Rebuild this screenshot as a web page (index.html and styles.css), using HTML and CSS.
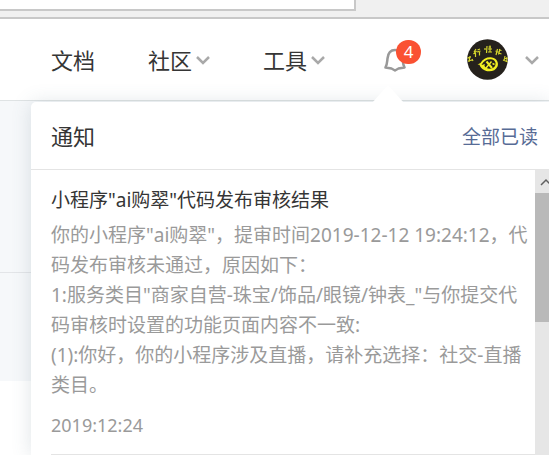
FILE: index.html
```html
<!DOCTYPE html>
<html lang="zh-CN">
<head>
<meta charset="utf-8">
<title>通知</title>
<link rel="stylesheet" href="styles.css">
</head>
<body>
<div class="browser-bar"><div class="browser-tab"></div></div>
<header class="header">
  <nav class="nav">
    <a class="nav-link" href="#">文档</a>
    <a class="nav-link" href="#">社区<svg class="chevron" viewBox="0 0 14 10"><path d="M1 2l6 6L13 2"/></svg></a>
    <a class="nav-link" href="#">工具<svg class="chevron" viewBox="0 0 14 10"><path d="M1 2l6 6L13 2"/></svg></a>
  </nav>
  <button class="bell" type="button" aria-label="通知">
    <svg class="bell-icon" viewBox="0 0 22 26"><path d="M1.500 20.500C3 18 3 16 3.500 11.500C4 6.500 6.500 3 11 3S18 6.500 18.500 11.500C19 16 19 18 20.500 20.500L14.500 21.500L11 23.500L7.500 21.500Z"/></svg>
    <span class="badge">4</span>
  </button>
  <button class="account" type="button" aria-label="账号">
    <svg class="avatar" viewBox="0 0 41 41">
      <defs><clipPath id="disc"><circle cx="20.500" cy="20.500" r="20.300"/></clipPath></defs>
      <circle cx="20.500" cy="20.500" r="20.300" fill="#25211c"/>
      <g clip-path="url(#disc)" fill="none" stroke="#d6d62c" stroke-width="1.200">
        <path d="M0 19l4-1M1 22l4-1M3 17l-1 6M5 20l1 2"/>
        <path d="M9 10l-2 3M9.500 12l-3 3M8.500 14v4M10.500 11l2.500-1M10 13l3.500-1M12.500 13v3.500"/>
        <path d="M20 7l-.500 7M18 9v2M21.500 8h2.500M21 10h4M23 6.500v6M21 13h4"/>
        <path d="M30.500 10l-1.500 6M28.500 12l3 1M32 10.500l2.500 1M33 10l-1.500 5.500M31.500 14l3 1"/>
        <path d="M37 19l4 1M38 17l-1 5M36 21l5 2M40 18l-1 5"/>
        <path fill="#f2ef22" stroke="none" d="M10.500 25.500L13.500 24C16 19.500 21 17.500 25 18.500C30 19.500 32 24 30.500 27.500C28.500 32 23 33.500 18 31.500C14.500 30 13 27.500 12.500 25.800Z"/>
        <path fill="#25211c" stroke="none" d="M14.500 26C16.500 22 20 20 24 20.300C28 20.700 29.500 24 28 27C26 30 22 30.500 19 28.500C17.500 27.500 17 26.500 18 25Z"/>
        <path stroke="#f2ef22" stroke-width="2" d="M19.500 22.500l5.500 6.500"/>
        <path stroke="#f2ef22" stroke-width="1.400" d="M24.500 22.500l-5.500 6.500M25.500 24.500l2 1"/>
      </g>
    </svg>
    <svg class="chevron" viewBox="0 0 14 10"><path d="M1 2l6 6L13 2"/></svg>
  </button>
</header>
<main class="page">
  <div class="backdrop"></div>
  <section class="panel">
    <div class="panel-head">
      <h1 class="panel-title">通知</h1>
      <a class="read-all" href="#">全部已读</a>
    </div>
    <div class="panel-body">
      <article class="notice">
        <h2 class="notice-title">小程序"ai购翠"代码发布审核结果</h2>
        <p class="notice-text">你的小程序"ai购翠"，提审时间2019-12-12 19:24:12，代<br>码发布审核未通过，原因如下：<br>1:服务类目"商家自营-珠宝/饰品/眼镜/钟表_"与你提交代<br>码审核时设置的功能页面内容不一致:<br>(1):你好，你的小程序涉及直播，请补充选择：社交-直播<br>类目。</p>
        <time class="notice-date">2019:12:24</time>
      </article>
      <div class="scrollbar" aria-hidden="true">
        <div class="scroll-up"><svg class="scroll-arrow" viewBox="0 0 12 8"><path d="M1 7l5-5 5 5"/></svg></div>
        <div class="scroll-thumb"></div>
      </div>
    </div>
  </section>
</main>
</body>
</html>
```
FILE: styles.css
```css
* { box-sizing: border-box; }
body {
  margin: 0;
  min-height: 100vh;
  display: flex;
  flex-direction: column;
  overflow: hidden;
  background: #fff;
  color: #353535;
  font-family: "Noto Sans", "Noto Sans CJK SC", sans-serif;
}
a { text-decoration: none; color: inherit; }
button { border: 0; padding: 0; background: none; font: inherit; }
svg { display: block; flex: none; }

.browser-bar {
  height: 19px;
  background: #f0f0f0;
  border-bottom: 2px solid #c8c8c8;
}
.browser-tab {
  width: 65%;
  height: 11px;
  margin-left: -1px;
  background: #fff;
  border: solid #c8c8c8;
  border-width: 0 2px 2px 0;
}

.header {
  display: flex;
  align-items: center;
  height: 82px;
  padding: 0 10px 0 51px;
  border-bottom: 1px solid #dfe3e4;
}
.nav { display: flex; gap: 53px; }
.nav-link {
  display: flex;
  align-items: center;
  gap: 4px;
  font-size: 22px;
  line-height: 32px;
  white-space: nowrap;
}
.chevron { width: 14px; height: 10px; }
.chevron path { fill: none; stroke: #a9a9a9; stroke-width: 2.5; }
.bell { position: relative; margin-left: 59px; }
.bell-icon { width: 22px; height: 26px; }
.bell-icon path { fill: none; stroke: #999; stroke-width: 2.5; stroke-linejoin: round; }
.badge {
  position: absolute;
  left: 12px;
  top: -7px;
  width: 25px;
  height: 24px;
  border-radius: 12px;
  background: #fa5132;
  color: #fff;
  font-size: 17px;
  line-height: 24px;
  text-align: center;
}
.account {
  display: flex;
  align-items: center;
  gap: 17px;
  margin-left: auto;
}
.avatar { width: 41px; height: 41px; }

.page { position: relative; flex: 1; }
.backdrop {
  height: 280px;
  background: linear-gradient(#e3e5e8, #e3e5e8) 0 171px / 100% 1px no-repeat #f6f8fa;
}
.panel {
  position: absolute;
  top: 1px;
  right: 0;
  bottom: 0;
  left: 31px;
  display: flex;
  flex-direction: column;
  background: #fff;
  border-radius: 5px 0 0 0;
  box-shadow: 0 1px 20px rgba(80, 105, 120, 0.18);
}
.panel::before {
  content: "";
  position: absolute;
  left: 341px;
  top: -17px;
  border: solid transparent;
  border-width: 0 16px 18px;
  border-bottom-color: #fff;
}
.panel-head {
  display: flex;
  align-items: center;
  justify-content: space-between;
  height: 68px;
  padding: 0 11px 0 20px;
  border-bottom: 1px solid #e4e4e4;
}
.panel-title { margin: 0; font-size: 22px; font-weight: 400; line-height: 32px; }
.read-all { color: #576b95; font-size: 19px; }
.panel-body {
  display: flex;
  flex: 1;
  min-height: 0;
  overflow: hidden;
}
.notice {
  flex: 1;
  min-width: 0;
  align-self: flex-start;
  margin-left: 20px;
  padding: 15px 0 14px;
  border-bottom: 1px solid #e4e4e4;
  font-size: 19px;
  line-height: 30px;
  white-space: nowrap;
}
.notice-title { margin: 0 0 5px; font-size: 19px; font-weight: 400; }
.notice-text { margin: 0 0 10px; color: #9a9a9a; }
.notice-date { display: block; color: #9a9a9a; font-size: 18px; }
.scrollbar {
  flex: none;
  width: 22px;
  margin-right: -8px;
  background: #e6e6e6;
}
.scroll-up {
  display: flex;
  align-items: center;
  justify-content: center;
  height: 23px;
}
.scroll-arrow { width: 12px; height: 8px; }
.scroll-arrow path { fill: none; stroke: #606060; stroke-width: 1.5; }
.scroll-thumb { height: 129px; background: #b9b9b9; }
```
